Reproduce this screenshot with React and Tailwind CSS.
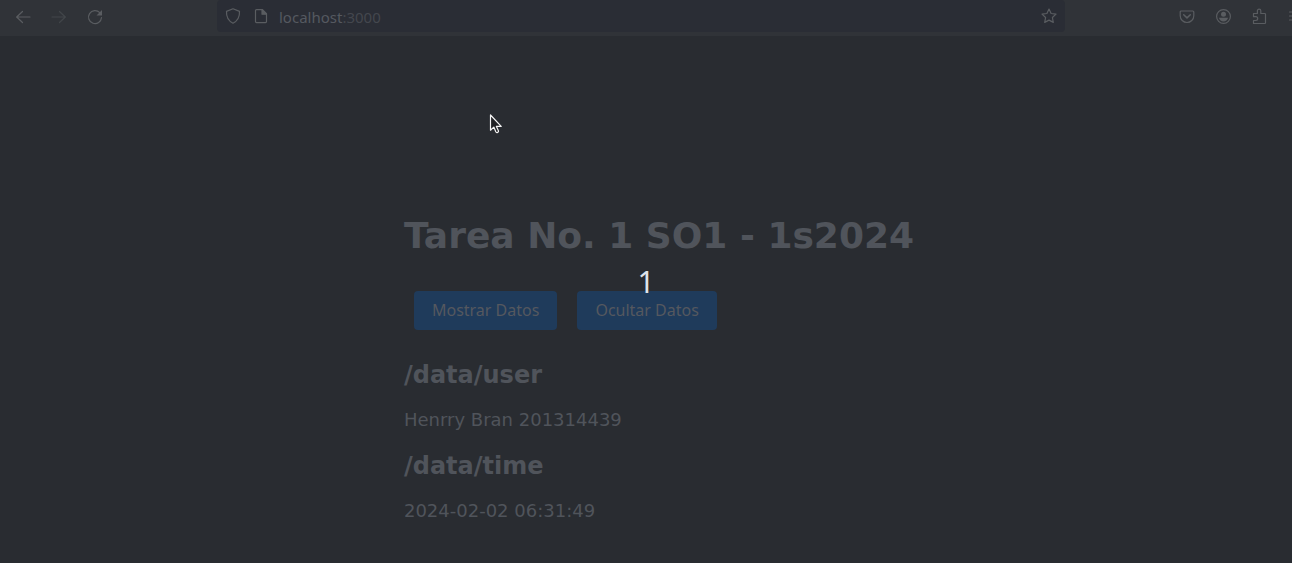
import React from "react";

function Icon({ children, className = "" }) {
  return (
    <svg
      aria-hidden="true"
      viewBox="0 0 16 16"
      className={`size-4 shrink-0 overflow-visible ${className}`}
      fill="none"
      stroke="currentColor"
      strokeWidth="1.2"
      strokeLinecap="round"
      strokeLinejoin="round"
    >
      {children}
    </svg>
  );
}

function ToolButton({ label, className = "", children }) {
  return (
    <button
      type="button"
      aria-label={label}
      className={`flex size-9 shrink-0 items-center justify-center ${className}`}
    >
      <Icon>{children}</Icon>
    </button>
  );
}

function Toolbar() {
  return (
    <header className="flex h-9 items-start overflow-hidden bg-[#303338] pl-[5px] text-[#5a5d61]">
      <nav aria-label="Navigation" className="-mt-px flex">
        <ToolButton label="Back">
          <path d="M15 8H1.5M7.5 2.5 1.7 8l5.8 5.5" />
        </ToolButton>
        <ToolButton label="Forward" className="text-[#42464a]">
          <path d="M1 8h13.5M8.5 2.5 14.3 8l-5.8 5.5" />
        </ToolButton>
        <ToolButton label="Reload">
          <path d="M14.5 8.500A6.500 6.500 0 1 1 12.800 3.700" />
          <path d="M15 1v5.500H9.500z" fill="currentColor" stroke="none" />
        </ToolButton>
      </nav>

      <div className="mx-[104px] flex h-8 min-w-0 flex-1 items-center gap-3 rounded bg-[#2a2d35] px-2">
        <Icon>
          <path d="M8 .8 14.500 3.400c.3 5.500-1.800 9.500-6.500 11.800C3.300 12.900 1.200 8.900 1.500 3.400z" />
        </Icon>
        <Icon>
          <path d="M3.500 1.600h6l4 4v8a1 1 0 0 1-1 1h-9a1 1 0 0 1-1-1v-11a1 1 0 0 1 1-1z" />
          <path d="M9 1.600v4.600h4.500z" fill="currentColor" />
        </Icon>
        <div
          role="textbox"
          aria-label="Address"
          className="-ml-0.5 min-w-0 flex-1 pt-px font-['Noto_Sans',sans-serif] text-[15px] leading-5 text-[#555960]"
        >
          localhost<span className="text-[#44474e]">:3000</span>
        </div>
        <button type="button" aria-label="Bookmark this page">
          <Icon>
            <path d="m8 1 2.100 4.500 4.900.6-3.600 3.400.9 4.900L8 12.100l-4.300 2.300.9-4.900L1 6.100l4.900-.6z" />
          </Icon>
        </button>
      </div>

      <div className="-mt-px -mr-[21px] flex shrink-0">
        <ToolButton label="Save to Pocket">
          <path d="M2.200 2h11.600a1 1 0 0 1 1 1v3.700a6.800 6.800 0 0 1-13.600 0V3a1 1 0 0 1 1-1z" />
          <path d="M4.700 5.800 8 8.900l3.300-3.100" strokeWidth="1.500" />
        </ToolButton>
        <ToolButton label="Account">
          <circle cx="8.500" cy="7.500" r="6.900" />
          <circle cx="8.500" cy="5.300" r="2.500" fill="currentColor" stroke="none" />
          <path d="M4 8.800h9c-.4 2.200-2.200 3.700-4.500 3.700S4.400 11 4 8.800z" fill="currentColor" stroke="none" />
        </ToolButton>
        <ToolButton label="Extensions">
          <path d="M2.500 4.500H6.400V1.800a1.700 1.700 0 0 1 3.400 0v2.700h3.900a.8.800 0 0 1 .8.800v8.400a.8.800 0 0 1-.8.800H2.500v-3h2.300a1.900 1.900 0 0 0 0-3.800H2.500z" />
        </ToolButton>
        <ToolButton label="Menu">
          <path d="M2.500 3h13M2.500 7h13M2.500 11h13" />
        </ToolButton>
      </div>
    </header>
  );
}

function ActionButton({ children }) {
  return (
    <button
      type="button"
      className="rounded bg-[#1f3b5b] px-[18px] pt-[7px] pb-2 font-['Noto_Sans',sans-serif] text-base leading-6 text-[#55585f]"
    >
      {children}
    </button>
  );
}

function DataBlock({ title, value }) {
  return (
    <section className="flex flex-col gap-5">
      <h2 className="text-2xl leading-7 font-bold">{title}</h2>
      <p className="text-lg leading-[22px]">{value}</p>
    </section>
  );
}

export default function App() {
  return (
    <div className="relative min-h-screen overflow-hidden bg-[#292c31] font-['DejaVu_Sans',sans-serif] text-[#50545b]">
      <Toolbar />
      <main className="flex justify-center pt-[179px] pb-10 pl-[26px]">
        <div>
          <h1 className="text-4xl leading-[42px] font-bold">Tarea No. 1 SO1 - 1s2024</h1>
          <div className="flex gap-5 px-[10px] pt-[34px] pb-[31px]">
            <ActionButton>Mostrar Datos</ActionButton>
            <ActionButton>Ocultar Datos</ActionButton>
          </div>
          <div className="flex flex-col gap-[21px]">
            <DataBlock title="/data/user" value="Henrry Bran 201314439" />
            <DataBlock title="/data/time" value="2024-02-02 06:31:49" />
          </div>
        </div>
      </main>

      <div className="pointer-events-none absolute inset-0 flex items-center justify-center font-['Noto_Sans',sans-serif] text-3xl leading-9 text-[#dfe3ea]">
        1
      </div>

      <svg
        aria-hidden="true"
        viewBox="0 0 14 21"
        className="pointer-events-none absolute top-[113px] left-[489px] h-[21px] w-[14px]"
      >
        <path
          d="M1.500 2v15.200l3.300-3.100 2 4.700c.7 1.500 3.300.5 2.600-1.100l-2-4.300h4.800z"
          fill="#202124"
          stroke="#f4f4f4"
          strokeWidth="1.200"
          strokeLinejoin="round"
        />
      </svg>
    </div>
  );
}
